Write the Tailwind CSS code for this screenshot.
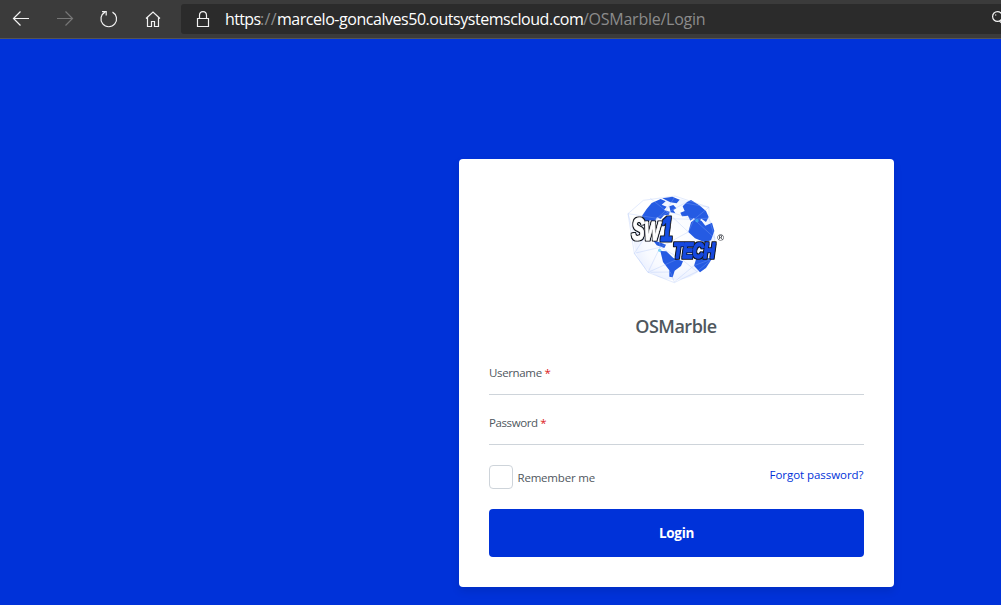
<!DOCTYPE html>
<html lang="en">
<head>
<meta charset="utf-8">
<title>OSMarble - Login</title>
<script src="https://cdn.jsdelivr.net/npm/@tailwindcss/browser@4"></script>
</head>
<body class="w-[1001px] h-[605px] overflow-hidden flex flex-col bg-[#0032d9] font-['Open_Sans','Noto_Sans',sans-serif]">
<header class="h-[39px] shrink-0 flex bg-[#3b3b3b] border-b border-[#555555] pt-1 overflow-hidden">
  <nav class="w-[181px] shrink-0 h-[30px]">
    <svg width="181" height="30" viewBox="0 4 181 30" fill="none" stroke="#f2f2f2" stroke-width="1.2">
      <path d="M29 18.500H14M20.500 11.500L13.500 18.500L20.500 25.500"/>
      <path stroke="#777777" d="M57 18.500H72M65.500 11.500L72.500 18.500L65.500 25.500"/>
      <path d="M112.500 12.100A7.800 7.800 0 1 1 105 12.100M102 11.600H106.200V15.500"/>
      <path d="M146 18.500L153 12L160 18.500M147.500 17.500V26.500H151.500V21.500H154.500V26.500H158.500V17.500"/>
    </svg>
  </nav>
  <div class="flex-1 h-[30px] bg-[#2b2b2b] rounded-l-[3px] flex items-center overflow-hidden">
    <svg class="shrink-0" width="44" height="30" viewBox="181 4 44 30" fill="none" stroke="#f2f2f2" stroke-width="1.2">
      <path d="M197.500 18.500H208.500V26.500H197.500ZM199.500 18.500V15.500C199.500 10.200 206.500 10.200 206.500 15.500V18.500"/>
    </svg>
    <div class="flex text-base leading-[30px] text-white whitespace-nowrap">
      <span class="w-[35px] tracking-[-0.65px]">https</span><span class="w-[17px] text-[#8b8b8b] tracking-[0.3px]">://</span><span class="w-[306px] tracking-[-0.46px]">marcelo-goncalves50.outsystemscloud.com</span><span class="text-[#8b8b8b] tracking-[-0.25px]">/OSMarble/Login</span>
    </div>
    <svg class="ml-auto shrink-0" width="10" height="30" viewBox="991 4 10 30" fill="none" stroke="#f2f2f2" stroke-width="1.200">
      <circle cx="997.500" cy="16.500" r="4.900"/><path d="M995 15H996.300M999.500 21L1002 23.500"/>
    </svg>
  </div>
</header>
<main class="flex-1 pt-[120px] pl-[459px]">
  <form class="w-[435px] h-[428px] bg-white rounded shadow-[0_4px_8px_rgba(0,0,0,0.1)] px-[30px] pt-[31px] text-[11.5px] text-[#4f575e]">
    <svg class="mx-auto block relative left-[-1.5px]" width="110" height="100" viewBox="0 0 330 300">
      <defs>
        <radialGradient id="sea"><stop offset="0" stop-color="#fff"/><stop offset=".75" stop-color="#f8faff"/><stop offset="1" stop-color="#edf2ff"/></radialGradient>
        <filter id="outline" x="-10%" y="-20%" width="120%" height="140%">
          <feMorphology in="SourceAlpha" operator="dilate" radius="3.5" result="edge"/>
          <feFlood flood-color="#10131c"/>
          <feComposite in2="edge" operator="in" result="rim"/>
          <feMerge><feMergeNode in="rim"/><feMergeNode in="SourceGraphic"/></feMerge>
        </filter>
      </defs>
      <circle cx="163" cy="148" r="122" fill="url(#sea)"/>
      <g fill="#255be3">
        <path d="M80 57L95 39L122 27L137 34L125 44L140 50L132 60L149 65L147 74L132 76L122 87L111 82L103 98L92 91L77 96L66 78Z"/>
        <path d="M127 25L157 20L179 29L170 40L151 37L139 31Z"/>
        <path d="M148 49L160 45L169 55L160 60L166 70L152 67Z"/>
        <path d="M188 49L201 36L213 30L238 46L258 63L266 81L258 96L244 86L232 99L222 84L211 92L204 77L186 79L181 68L194 63Z"/>
        <path d="M213 97L229 84L245 93L256 107L276 98L283 123L273 151L254 157L225 145L205 126Z"/>
        <path d="M229 205L271 204L275 208L258 234L240 247L222 227Z"/>
        <path d="M121 183L139 184L160 204L189 214L183 228L164 242L158 262L148 260L148 241L129 216Z"/>
        <path d="M99 151L123 158L138 164L133 174L110 166Z"/>
      </g>
      <g fill="none" stroke="#9db9f8" stroke-width="1.300" opacity=".65">
        <path d="M24 71L70 31L165 18L267 52L267 84L285 145L276 207L231 245L163 278L84 247L43 190L24 71L111 85L195 39L267 52L222 88L285 145"/>
        <path d="M91 25L137 62L111 85L43 190L120 172L84 247L151 246L163 276L222 227L276 207L180 204L120 172L111 85L222 88L205 126L120 172M137 62L222 88L267 84M165 20L137 62L205 126M24 71L43 137L111 85M84 247L180 204L231 245M43 190L84 247"/>
      </g>
      <g fill="#41c0f0" opacity=".65"><circle cx="65" cy="91" r="5"/><circle cx="231" cy="92" r="5"/><circle cx="119" cy="181" r="5"/></g>
      <g font-family="Liberation Sans, sans-serif" font-weight="700" font-style="italic" stroke-linejoin="round" filter="url(#outline)">
        <text transform="translate(35 149) scale(.63 1)" font-size="92" stroke-width="3" fill="#fff" stroke="#fff">S<tspan dx="-2" font-size="80">W</tspan><tspan dx="2" dy="4" font-size="104" fill="#174fe4" stroke="#174fe4">1</tspan></text>
        <text transform="translate(160 205) scale(.7 1)" font-size="68" textLength="178" lengthAdjust="spacing" fill="#1749df" stroke="#1749df" stroke-width="4">TECH</text>
      </g>
      <text x="292" y="153" font-family="Liberation Sans, sans-serif" font-size="27" font-weight="700" fill="#30343d">®</text>
    </svg>
    <h1 class="mt-[24px] h-6 text-center text-[18px] leading-6 font-semibold tracking-[-0.5px] relative left-[-0.5px]">OSMarble</h1>
    <div class="h-[57px] border-b border-[#ced4da] pt-[26px]"><label class="block leading-[18px] tracking-[-0.35px]">Username <span class="text-[#dc2020]">*</span></label></div>
    <div class="h-[50px] border-b border-[#ced4da] pt-[19px]"><label class="block leading-[18px] tracking-[-0.4px]">Password <span class="text-[#dc2020]">*</span></label></div>
    <div class="mt-5 flex items-center h-6">
      <span class="size-6 border border-[#ced4da] rounded mr-[4.5px]"></span><label class="relative top-px tracking-[-0.2px]">Remember me</label>
      <a class="ml-auto relative -top-0.5 right-[0.5px] text-[#0032d9] tracking-[-0.05px]">Forgot password?</a>
    </div>
    <button type="button" class="mt-5 w-full h-12 rounded bg-[#0032d9] text-white text-[13.500px] font-bold tracking-[-0.3px]">Login</button>
  </form>
</main>
</body>
</html>
